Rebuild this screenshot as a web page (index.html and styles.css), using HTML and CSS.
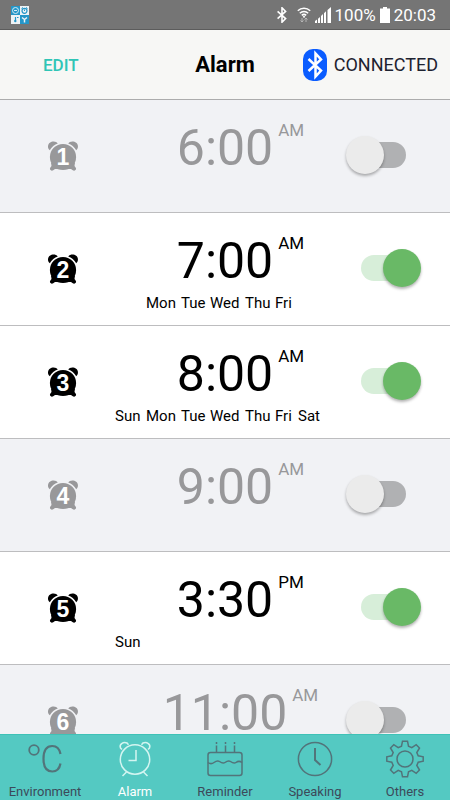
FILE: index.html
```html
<!DOCTYPE html>
<html lang="en">
<head>
<meta charset="utf-8">
<meta name="viewport" content="width=device-width, initial-scale=1">
<title>Alarm</title>
<link rel="stylesheet" href="styles.css">
</head>
<body>
<svg class="defs" aria-hidden="true">
  <symbol id="clock" viewBox="0 0 32 30">
    <circle cx="16" cy="16" r="13.1"/>
    <path d="M2.800 9.200C0 7.400 .4 2 4.600 .8 7.200 .1 9.800 .8 10.800 2.500 7.600 3.600 4.600 6 2.800 9.200zM29.200 9.200c2.800-1.800 2.400-7.200-1.800-8.400-2.600-.7-5.200 0-6.200 1.700 3.200 1.100 6.200 3.500 8 6.700z"/>
    <path d="M4 21.500l.5 3.500-1.100 1.400a2 2 0 0 0 2.800 2.800L8 28h4v-4zM28 21.500l-.5 3.500 1.100 1.400a2 2 0 0 1-2.800 2.800L24 28h-4v-4z"/>
  </symbol>
  <symbol id="rune" viewBox="0 0 14 20">
    <path d="M1.500 5.500l10 9L7 19V1l4.500 4.500-10 9"/>
  </symbol>
</svg>
<div class="app">
  <div class="status">
    <svg class="status-app" viewBox="0 0 18 18" aria-hidden="true">
      <path fill="#eef3f6" d="M0 0h18v18H0z"/>
      <path fill="#2596c8" d="M0 0h9v9H0zM9 9h9v9H9z"/>
      <circle cx="4.500" cy="4.500" r="3" fill="none" stroke="#d5ecf6"/>
      <path d="M3 4.500h3" stroke="#d5ecf6"/>
      <circle cx="13.500" cy="4.800" r="2.500" fill="none" stroke="#2596c8" stroke-width="1.200"/>
      <path d="M10.500 2.500l1.500-1M16.500 2.500l-1.500-1M13.500 3.500v1.500" stroke="#2596c8"/>
      <path d="M4.500 11v3M6 11.500h1.500" stroke="#2596c8" stroke-width="1.200"/>
      <circle cx="4.300" cy="15" r="1.200" fill="#2596c8"/>
      <path d="M11 11.500l2.500 2v3M16 11.500l-2.500 2" fill="none" stroke="#eef3f6" stroke-width="1.500"/>
    </svg>
    <div class="status-right">
      <svg class="status-bt" aria-hidden="true"><use href="#rune"/></svg>
      <svg class="status-wifi" viewBox="0 0 14 16" aria-hidden="true">
        <path d="M.8 3.800a9 9 0 0 1 12.400 0M2.800 6.200a6 6 0 0 1 8.400 0M4.800 8.400a3.200 3.200 0 0 1 4.400 0" fill="none" stroke="#fff" stroke-width="1.500"/>
        <path d="M7 8.500l1.300 1.300L7 11.100 5.700 9.800z" fill="#fff"/>
        <path d="M5 11v4M3.500 13.500L5 15l1.500-1.500M9 15v-4M7.500 12.500L9 11l1.500 1.500" fill="none" stroke="#b5b5b5"/>
      </svg>
      <svg class="status-signal" viewBox="0 0 16 16" aria-hidden="true">
        <path fill="#fff" d="M0 14l2-1.500V16H0zM3 11.800l2-1.800v6H3zM6 9l2-2v9H6zM9 6.300l2-2V16H9zM12.500 3L16 0v16h-3.500z"/>
      </svg>
      <span>100%</span>
      <svg class="status-battery" viewBox="0 0 10 16" aria-hidden="true"><path fill="#fff" d="M3 0h4v1.500h3V16H0V1.500h3z"/></svg>
      <span>20:03</span>
    </div>
  </div>

  <header class="header">
    <button class="edit" type="button">EDIT</button>
    <h1 class="title">Alarm</h1>
    <div class="connection">
      <svg class="bt-badge" viewBox="0 0 24 32" aria-hidden="true">
        <rect width="24" height="32" rx="10" fill="#0a5cff"/>
        <path d="M5.500 10L18 21.500l-5.500 6v-23l5.500 6L5.500 22" fill="none" stroke="#fff" stroke-width="2.500"/>
      </svg>
      <span>CONNECTED</span>
    </div>
  </header>

  <main class="list">
    <section class="row off">
      <svg class="clock" viewBox="0 0 32 30" aria-hidden="true"><use href="#clock"/><text x="16" y="24">1</text></svg>
      <div class="info">
        <div class="when"><span class="time">6:00</span><span class="half">AM</span></div>
      </div>
      <input class="toggle" type="checkbox" role="switch" aria-label="Alarm 1">
    </section>
    <section class="row">
      <svg class="clock" viewBox="0 0 32 30" aria-hidden="true"><use href="#clock"/><text x="16" y="24">2</text></svg>
      <div class="info">
        <div class="when"><span class="time">7:00</span><span class="half">AM</span></div>
        <div class="days"><span class="mon">Mon</span><span>Tue</span><span>Wed</span><span>Thu</span><span>Fri</span></div>
      </div>
      <input class="toggle" type="checkbox" role="switch" aria-label="Alarm 2" checked>
    </section>
    <section class="row">
      <svg class="clock" viewBox="0 0 32 30" aria-hidden="true"><use href="#clock"/><text x="16" y="24">3</text></svg>
      <div class="info">
        <div class="when"><span class="time">8:00</span><span class="half">AM</span></div>
        <div class="days"><span>Sun</span><span>Mon</span><span>Tue</span><span>Wed</span><span>Thu</span><span>Fri</span><span>Sat</span></div>
      </div>
      <input class="toggle" type="checkbox" role="switch" aria-label="Alarm 3" checked>
    </section>
    <section class="row off">
      <svg class="clock" viewBox="0 0 32 30" aria-hidden="true"><use href="#clock"/><text x="16" y="24">4</text></svg>
      <div class="info">
        <div class="when"><span class="time">9:00</span><span class="half">AM</span></div>
      </div>
      <input class="toggle" type="checkbox" role="switch" aria-label="Alarm 4">
    </section>
    <section class="row">
      <svg class="clock" viewBox="0 0 32 30" aria-hidden="true"><use href="#clock"/><text x="16" y="24">5</text></svg>
      <div class="info">
        <div class="when"><span class="time">3:30</span><span class="half">PM</span></div>
        <div class="days"><span>Sun</span></div>
      </div>
      <input class="toggle" type="checkbox" role="switch" aria-label="Alarm 5" checked>
    </section>
    <section class="row off">
      <svg class="clock" viewBox="0 0 32 30" aria-hidden="true"><use href="#clock"/><text x="16" y="24">6</text></svg>
      <div class="info">
        <div class="when"><span class="time">11:00</span><span class="half">AM</span></div>
      </div>
      <input class="toggle" type="checkbox" role="switch" aria-label="Alarm 6">
    </section>
  </main>

  <nav class="tabs">
    <a class="tab" href="#environment">
      <svg viewBox="0 0 38 38" aria-hidden="true">
        <circle cx="8" cy="10" r="4.800" stroke-width="1.800"/>
        <path stroke-width="2.200" d="M34.500 14C33.500 8.600 31 6 26.300 6c-5.500 0-8.800 4.500-8.800 12.800s3.300 12.700 8.800 12.700c4.700 0 7.200-2.600 8.200-8"/>
      </svg>
      <span>Environment</span>
    </a>
    <a class="tab current" href="#alarm" aria-current="page">
      <svg viewBox="0 0 38 38" aria-hidden="true">
        <circle cx="19" cy="19.500" r="14.700"/>
        <path d="M20 10v10.500h-7.500M10.500 32l-4 4M27.500 32l4 4"/>
        <path d="M6 9.500L4.500 8C3 4.500 7 1.500 11 3l1.500 1.700M32 9.500L33.500 8C35 4.500 31 1.500 27 3l-1.500 1.700"/>
      </svg>
      <span>Alarm</span>
    </a>
    <a class="tab" href="#reminder">
      <svg viewBox="0 0 38 38" aria-hidden="true">
        <rect x="2" y="12.500" width="34" height="23" rx="2.500"/>
        <path d="M2 22.500c2 1.500 4 1.500 6 0s3.500-2.500 5.500-1 3.500 2.500 5.500 1 3.500-2.500 5.500-1 3.500 2.500 5.500 1 4-1.500 6 0"/>
        <path d="M10.500 5.500V12M19.500 5.500V12M28.500 5.500V12M10.500 2v2M19.500 2v2M28.500 2v2"/>
      </svg>
      <span>Reminder</span>
    </a>
    <a class="tab" href="#speaking">
      <svg viewBox="0 0 38 38" aria-hidden="true">
        <circle cx="19" cy="19" r="16.600"/>
        <path stroke-width="2" d="M19 8v12l5.500 5"/>
      </svg>
      <span>Speaking</span>
    </a>
    <a class="tab" href="#others">
      <svg viewBox="0 0 38 38" aria-hidden="true">
        <circle cx="19" cy="19" r="8"/>
        <path d="M16.500 1.200h5l1 5 3.300 1.400 4.400-2.900 3.300 3.300-2.700 4.500 1.400 3.300 5 1v4.400l-5 1-1.400 3.300 2.700 4.500-3.300 3.300-4.400-2.900-3.300 1.400-1 5h-5l-1-5-3.300-1.400-4.400 2.900L4.500 30l2.700-4.500-1.400-3.300-5-1v-4.400l5-1 1.400-3.300L4.500 8l3.300-3.300 4.400 2.900 3.300-1.400z"/>
      </svg>
      <span>Others</span>
    </a>
  </nav>
</div>
</body>
</html>
```
FILE: styles.css
```css
* {
  box-sizing: border-box;
}

body {
  margin: 0;
  font-family: Roboto, "Liberation Sans", sans-serif;
  color: #000;
}

.defs {
  position: absolute;
  width: 0;
  height: 0;
}

.app {
  display: flex;
  flex-direction: column;
  height: 100vh;
  background: #f1f2f5;
}

/* Status bar */

.status {
  display: flex;
  flex: none;
  align-items: center;
  justify-content: space-between;
  height: 30px;
  padding: 0 14px 0 11px;
  border-bottom: 1px solid #5c5c5c;
  background: #757575;
  color: #fff;
  font-size: 17px;
  line-height: 20px;
}

.status-app {
  width: 18px;
  height: 18px;
}

.status-right {
  display: flex;
  align-items: center;
  gap: 4px;
}

.status-bt {
  width: 12px;
  height: 16px;
  margin-right: 5px;
  fill: none;
  stroke: #fff;
  stroke-width: 2;
}

.status-wifi {
  width: 14px;
  height: 16px;
}

.status-signal {
  width: 16px;
  height: 16px;
}

.status-battery {
  width: 10px;
  height: 16px;
}

/* Header */

.header {
  display: grid;
  flex: none;
  grid-template-columns: 1fr auto 1fr;
  align-items: center;
  height: 70px;
  padding: 1px 12px 0;
  border-bottom: 1px solid #acacac;
  background: #f7f7f5;
}

.edit {
  justify-self: start;
  margin-left: 31px;
  padding: 0;
  border: 0;
  background: none;
  color: #2fc5b6;
  font: 500 17px/20px Roboto, "Liberation Sans", sans-serif;
}

.title {
  margin: 0;
  font-size: 22px;
  font-weight: 700;
  line-height: 28px;
}

.connection {
  display: flex;
  align-items: center;
  justify-self: end;
  gap: 7px;
  color: #1d2230;
  font-size: 18px;
  line-height: 20px;
}

.bt-badge {
  width: 24px;
  height: 32px;
}

/* Alarm list */

.list {
  flex: 1;
  min-height: 0;
  overflow: hidden;
}

.row {
  display: grid;
  grid-template-columns: 1fr 220px 1fr;
  align-items: center;
  height: 113px;
  border-bottom: 1px solid #bdbdbf;
  background: #fff;
}

.row.off {
  background: #f1f2f5;
  color: #98989a;
}

.clock {
  justify-self: center;
  width: 32px;
  height: 30px;
  margin-left: 11px;
  fill: currentColor;
}

.clock text {
  fill: #fff;
  font: 700 23px "Liberation Sans", sans-serif;
  text-anchor: middle;
}

.info {
  align-self: start;
  padding-top: 18px;
}

.when {
  display: grid;
  grid-template-columns: 1fr auto 1fr;
  gap: 5px;
}

.time {
  grid-column: 2;
  font-size: 50px;
  line-height: 60px;
}

.half {
  padding-top: 2px;
  font-size: 17px;
  line-height: 20px;
}

/* One column per weekday, Sunday first */
.days {
  display: grid;
  grid-template-columns: 31px 35px 29px 35px 30px 23px 1fr;
  padding-top: 2px;
  font-size: 15px;
  line-height: 20px;
}

.days .mon {
  grid-column: 2;
}

.toggle {
  display: flex;
  position: relative;
  align-items: center;
  justify-self: center;
  width: 76px;
  height: 38px;
  margin: 0 20px 2px 0;
  appearance: none;
}

.toggle::before {
  width: 45px;
  height: 26px;
  margin-left: 16px;
  border-radius: 13px;
  background: #b0b1b3;
  content: "";
}

.toggle::after {
  position: absolute;
  left: 1px;
  width: 38px;
  height: 38px;
  border-radius: 50%;
  background: #ebebeb;
  box-shadow: 0 2px 3px rgba(0, 0, 0, 0.3);
  content: "";
}

.toggle:checked::before {
  background: #d7eed9;
}

.toggle:checked::after {
  left: 38px;
  background: #69b966;
}

/* Bottom tabs */

.tabs {
  display: grid;
  flex: none;
  grid-template-columns: repeat(5, 1fr);
  height: 66px;
  border-top: 1px solid #3fc2b7;
  background: #54c9c2;
}

.tab {
  display: flex;
  flex-direction: column;
  align-items: center;
  gap: 6px;
  padding-top: 5px;
  color: #3c4a5a;
  font-size: 13px;
  line-height: 16px;
  text-decoration: none;
}

.tab svg {
  width: 38px;
  height: 38px;
  fill: none;
  stroke: #52747a;
  stroke-width: 1.5;
}

.tab.current {
  color: #fff;
}

.tab.current svg {
  stroke: #d4f5f1;
}
```
